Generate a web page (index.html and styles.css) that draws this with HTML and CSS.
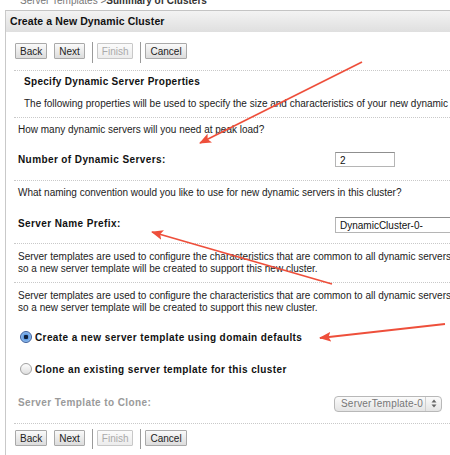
FILE: index.html
```html
<!DOCTYPE html>
<html lang="en">
<head>
  <meta charset="UTF-8" />
  <title>Create a New Dynamic Cluster</title>
  <link rel="stylesheet" href="styles.css">
</head>
<body>
  <div class="crumb">Server Templates &gt;<b>Summary of Clusters</b></div>

  <div class="panel">
    <div class="panel-head">Create a New Dynamic Cluster</div>
    <div class="panel-body">

      <div class="toolbar">
        <button class="btn">Back</button>
        <button class="btn">Next</button>
        <span class="bar-sep"></span>
        <button class="btn" disabled>Finish</button>
        <span class="bar-sep"></span>
        <button class="btn">Cancel</button>
      </div>

      <div class="section intro">
        <div class="intro-title">Specify Dynamic Server Properties</div>
        <div class="intro-text">The following properties will be used to specify the size and characteristics of your new dynamic cluster.</div>
      </div>

      <div class="section">
        <div class="question">How many dynamic servers will you need at peak load?</div>
        <div class="field">
          <label class="field-label">Number of Dynamic Servers:</label>
          <div class="text-box small">2</div>
        </div>
      </div>

      <div class="section">
        <div class="question">What naming convention would you like to use for new dynamic servers in this cluster?</div>
        <div class="field field-prefix">
          <label class="field-label">Server Name Prefix:</label>
          <div class="text-box wide">DynamicCluster-0-</div>
        </div>
      </div>

      <div class="section">
        <p class="para">Server templates are used to configure the characteristics that are common to all dynamic servers in a cluster,<br>so a new server template will be created to support this new cluster.</p>
      </div>

      <div class="section">
        <p class="para">Server templates are used to configure the characteristics that are common to all dynamic servers in a cluster,<br>so a new server template will be created to support this new cluster.</p>
        <div class="choice first">
          <span class="radio checked"></span>
          <span>Create a new server template using domain defaults</span>
        </div>
        <div class="choice">
          <span class="radio"></span>
          <span>Clone an existing server template for this cluster</span>
        </div>
        <div class="field field-clone">
          <label class="field-label muted">Server Template to Clone:</label>
          <div class="select-box">
            <span class="select-value">ServerTemplate-0</span>
            <span class="select-arrows">
              <svg width="6" height="9" viewBox="0 0 6 9"><path d="M0.5 3.5 L3 0.5 L5.5 3.5 Z M0.5 5.5 L3 8.5 L5.5 5.5 Z" fill="#666"/></svg>
            </span>
          </div>
        </div>
      </div>

      <div class="section toolbar bottom">
        <button class="btn">Back</button>
        <button class="btn">Next</button>
        <span class="bar-sep"></span>
        <button class="btn" disabled>Finish</button>
        <span class="bar-sep"></span>
        <button class="btn">Cancel</button>
      </div>

    </div>
  </div>

  <!-- annotation arrows drawn over the screenshot -->
  <svg class="notes" width="450" height="455" viewBox="0 0 450 455">
    <defs>
      <marker id="head" markerUnits="userSpaceOnUse" markerWidth="12" markerHeight="10" refX="11" refY="5" orient="auto">
        <path d="M0 0 L12 5 L0 10 L2.5 5 Z" fill="#ee4f3b"/>
      </marker>
    </defs>
    <line x1="362" y1="62" x2="200" y2="143" stroke="#ee4f3b" stroke-width="1.8" marker-end="url(#head)"/>
    <line x1="332" y1="284" x2="152" y2="232" stroke="#ee4f3b" stroke-width="1.8" marker-end="url(#head)"/>
    <line x1="445" y1="324" x2="320" y2="338" stroke="#ee4f3b" stroke-width="1.8" marker-end="url(#head)"/>
  </svg>
</body>
</html>
```

FILE: styles.css
```css
body {
  margin: 0;
  width: 450px;
  height: 455px;
  overflow: hidden;
  position: relative;
  background: #fff;
  color: #222;
  font-family: 'Liberation Sans', Arial, sans-serif;
  font-size: 10px;
}
.crumb {
  height: 10px;
  line-height: 2px;
  padding-left: 20px;
  color: #777;
  white-space: nowrap;
}
.crumb b {
  color: #333;
}
.panel {
  margin-left: 5px;
  width: 600px;
  border-left: 1px solid #c9c9c9;
  border-top: 1px solid #c4c4c4;
}
.panel-head {
  height: 21px;
  line-height: 21px;
  padding-left: 4px;
  font-weight: 700;
  font-size: 10.5px;
  letter-spacing: 0.1px;
  color: #111;
  background: linear-gradient(#f3f3f3, #dfdfdf);
}
.panel-body {
  padding-left: 8px;
}
.toolbar {
  height: 38px;
  display: flex;
  align-items: flex-start;
  padding: 11px 0 0 1px;
  box-sizing: border-box;
}
.btn {
  height: 16px;
  padding: 0 4px;
  margin: 0 7px 0 0;
  font-family: inherit;
  font-size: 10px;
  color: #222;
  border: 1px solid #a9a9a9;
  border-radius: 1px;
  background: linear-gradient(#fafafa, #dcdcdc);
}
.btn:disabled {
  color: #aaa;
  border-color: #c8c8c8;
  background: linear-gradient(#fbfbfb, #ececec);
}
.bar-sep {
  width: 1px;
  height: 21px;
  margin: -1px 4px 0 0;
  background: #9a9a9a;
}
.section {
  border-top: 1px dotted #c9c9c9;
}
.intro {
  padding: 4px 0 6px 10px;
}
.intro-title {
  line-height: 14px;
  font-weight: 700;
  letter-spacing: 0.3px;
  color: #111;
}
.intro-text {
  margin-top: 8px;
  line-height: 14px;
  white-space: nowrap;
}
.question {
  margin-top: 5px;
  padding-left: 4px;
  line-height: 14px;
  white-space: nowrap;
}
.field {
  display: flex;
  align-items: center;
  height: 22px;
  margin-top: 11px;
  margin-bottom: 10px;
}
.field-prefix {
  margin-top: 12px;
  margin-bottom: 9px;
}
.field-label {
  width: 317px;
  flex: none;
  padding-left: 4px;
  font-weight: 700;
  letter-spacing: 0.4px;
  color: #111;
}
.field-label.muted {
  color: #9a9a9a;
}
.text-box {
  height: 15px;
  line-height: 15px;
  padding-left: 4px;
  box-sizing: border-box;
  border: 1px solid #b5b5b5;
  border-top-color: #8f8f8f;
  background: #fff;
  color: #111;
  white-space: nowrap;
}
.text-box.small {
  width: 60px;
}
.text-box.wide {
  width: 140px;
  height: 16px;
  margin-top: 4px;
}
.para {
  margin: 7px 0 7px;
  padding-left: 4px;
  line-height: 12px;
  white-space: nowrap;
}
.choice {
  display: flex;
  align-items: center;
  gap: 3px;
  height: 14px;
  margin-top: 18px;
  padding-left: 6px;
  font-weight: 700;
  letter-spacing: 0.4px;
  color: #111;
}
.choice.first {
  margin-top: 16px;
}
.radio {
  width: 12px;
  height: 12px;
  box-sizing: border-box;
  border-radius: 50%;
  border: 1px solid #a0a0a0;
  background: linear-gradient(#fdfdfd, #dedede);
}
.radio.checked {
  border-color: #3a5d9a;
  background: radial-gradient(circle, #10203a 0 2px, #5f9ae0 2.5px, #a9cdf5 6px);
}
.field-clone {
  height: 18px;
  margin-top: 17px;
  margin-bottom: 12px;
}
.select-box {
  display: flex;
  flex: none;
  align-items: center;
  width: 108px;
  height: 16px;
  margin-left: -1px;
  margin-top: 3px;
  padding: 0 0 0 6px;
  box-sizing: border-box;
  border: 1px solid #b8b8b8;
  border-radius: 4px;
  background: linear-gradient(#fbfbfb, #e4e4e4);
  color: #777;
  font-size: 10px;
  letter-spacing: 0.2px;
}
.select-value {
  flex: 1;
  white-space: nowrap;
}
.select-arrows {
  display: flex;
  flex: none;
  align-items: center;
  justify-content: center;
  width: 15px;
  height: 14px;
  border-left: 1px solid #cfcfcf;
}
.toolbar.bottom {
  height: 32px;
  padding-top: 6px;
}
.toolbar.bottom .bar-sep {
  height: 20px;
}
.notes {
  position: absolute;
  left: 0;
  top: 0;
  pointer-events: none;
}
```
